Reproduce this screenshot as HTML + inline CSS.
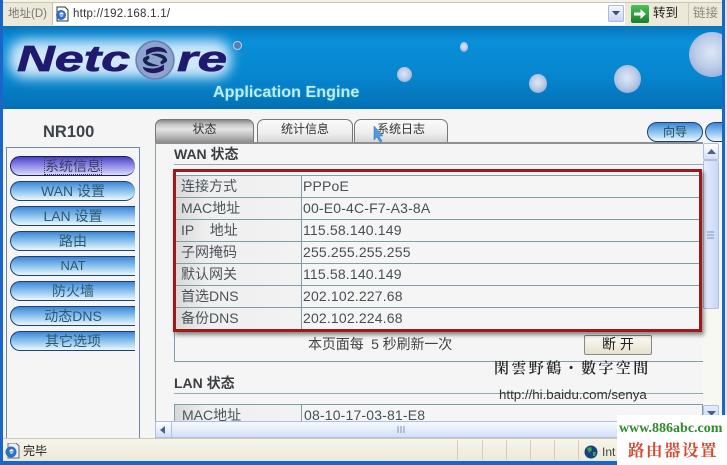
<!DOCTYPE html>
<html><head><meta charset="utf-8">
<style>
html,body{margin:0;padding:0;background:#f5f5f5}
#p{position:relative;width:727px;height:465px;overflow:hidden;background:#f5f5f5;font-family:"Liberation Sans","Noto Sans CJK SC",sans-serif;font-size:13px;color:#4a5a60}
#p div{position:absolute;box-sizing:border-box}
.t{white-space:nowrap}
.nav{left:10px;width:125px;height:20px;border:1px solid #1c3f78;border-right:0;border-radius:10px 0 0 10px;background:linear-gradient(#3f86d4 0,#5fa3e2 22%,#8fc4ee 52%,#c4e2f7 80%,#eef8fe 100%);text-align:center;line-height:18px;font-size:14px;color:#2f5870;white-space:nowrap}
.tab{top:119px;height:23px;border:1px solid #777;border-bottom:0;border-radius:7px 7px 0 0;background:linear-gradient(#fafafa,#eeeeee 60%,#d6d6d6);text-align:center;line-height:19px;font-size:12px;color:#333}
.row{left:175px;width:525px;height:22px;border-bottom:1px solid #7f9fa6}
.lab{left:0;top:0;width:127px;height:21px;border-right:1px solid #7f9fa6;padding-left:6px;line-height:21px;font-size:14px;color:#4a5458;white-space:nowrap;background:linear-gradient(90deg,#d8d8d8,#efefef 25%,#f2f2f2)}
.val{left:128px;top:0;line-height:21px;font-size:14px;letter-spacing:.17px;color:#465054;white-space:nowrap}
.b{border-radius:50%;background:radial-gradient(circle at 48% 45%,#dfe7f5 0,#bccde8 45%,#9db4dc 72%,#2a76b0 90%,#0a5a96 100%)}
</style></head><body>
<div id="p">
<!-- browser toolbar -->
<div style="left:0;top:0;width:727px;height:26px;background:#ece9d8"></div>
<div style="left:0;top:0;width:727px;height:3px;background:#f4f2e6;border-bottom:1px solid #c9c5b2"></div>
<div class="t" style="left:8px;top:6px;font-size:11.5px;color:#777;line-height:16px">地址(D)</div>
<div style="left:52px;top:3px;width:573px;height:22px;background:#fff;border-left:1px solid #c5c2b0"></div>
<svg style="position:absolute;left:54px;top:6px" width="16" height="16" viewBox="0 0 16 16"><path d="M3 1h8l3 3v11H3z" fill="#fff" stroke="#333"/><circle cx="7" cy="9" r="5" fill="#2d6fc4"/><circle cx="7.500" cy="8.500" r="2.200" fill="#fff"/><path d="M5 9h5" stroke="#2d6fc4"/></svg>
<div class="t" style="left:73px;top:7px;font-size:11.500px;color:#333;line-height:14px;letter-spacing:.24px">http://192.168.1.1/</div>
<div style="left:608px;top:5px;width:16px;height:17px;border:1px solid #aeb9d8;border-radius:2px;background:linear-gradient(#f4f7fe,#c9d6f4)"></div>
<svg style="position:absolute;left:612px;top:11px" width="8" height="5"><path d="M0 0h8L4 4.500z" fill="#3c4e82"/></svg>
<svg style="position:absolute;left:631px;top:5px" width="18" height="18" viewBox="0 0 18 18"><defs><linearGradient id="g" x1="0" y1="0" x2="0" y2="1"><stop offset="0" stop-color="#4cc05a"/><stop offset="1" stop-color="#15802a"/></linearGradient></defs><rect width="18" height="18" rx="2" fill="url(#g)"/><path d="M3 7.500h6.500V4l5.500 5-5.500 5v-3.500H3z" fill="#fff"/></svg>
<div class="t" style="left:653px;top:5px;font-size:12.500px;color:#222;line-height:17px">转到</div>
<div style="left:688px;top:3px;width:1px;height:22px;background:#cfcbb6"></div>
<div class="t" style="left:693px;top:5px;font-size:12.500px;color:#8a8a80;line-height:17px">链接</div>
<!-- window borders -->
<div style="left:0;top:0;width:3px;height:465px;background:#1a66c8;z-index:5"></div>
<div style="left:722px;top:0;width:3px;height:465px;background:#1a66c8;z-index:5"></div>
<div style="left:725px;top:0;width:2px;height:465px;background:#dfe8f5;z-index:5"></div>
<!-- banner -->
<div style="left:3px;top:26px;width:719px;height:83px;overflow:hidden;background:linear-gradient(#0676bc 0,#0a8fd8 18%,#0686cf 60%,#0470b5 100%)">
<div style="left:6px;top:14px;width:222px;height:38px;border-radius:16px;background:#cfe8fa;filter:blur(6px)"></div>
<div class="t" style="left:14px;top:11px;font-family:'Liberation Sans',sans-serif;font-style:italic;font-weight:bold;font-size:36px;line-height:44px;color:#201a6e;-webkit-text-stroke:.7px #201a6e;transform:scaleX(1.450);transform-origin:left">Netc</div>
<div class="t" style="left:174px;top:11px;font-family:'Liberation Sans',sans-serif;font-style:italic;font-weight:bold;font-size:36px;line-height:44px;color:#201a6e;-webkit-text-stroke:.7px #201a6e;transform:scaleX(1.470);transform-origin:left">re</div>
<svg style="position:absolute;left:132px;top:14px" width="40" height="40" viewBox="0 0 36 36"><circle cx="18" cy="18" r="17.500" fill="#8ea4cf"/><circle cx="18" cy="18" r="17" fill="none" stroke="#6a82b4" stroke-width="1.500"/><path d="M10 9c8-5 18-3 19 3-5-2-12-3-19 2M26 27c-8 5-18 3-19-3 5 2 12 3 19-2" fill="#1d1a5e"/><path d="M14 13c7-2 14 0 15 5 0 2-3 3-5 4-3-3 1-3 1-5-3-2-7-3-11-4zM22 23c-7 2-14 0-15-5 0-2 3-3 5-4 3 3-1 3-1 5 3 2 7 3 11 4z" fill="#16224f"/></svg>
<div style="left:230px;top:15px;width:9px;height:9px;border-radius:50%;background:#5a7cab;border:1px solid #b9d6ee"></div>
<div class="t" style="left:210px;top:57px;font-weight:bold;font-size:16px;line-height:20px;color:#b6f0f5;text-shadow:0 0 2px #3f9fc8;transform:scaleX(1.010);transform-origin:left">Application Engine</div>
<div class="b" style="left:394px;top:41px;width:15px;height:15px"></div>
<div class="b" style="left:457px;top:16px;width:8px;height:10px"></div>
<div class="b" style="left:526px;top:48px;width:18px;height:19px"></div>
<div class="b" style="left:611px;top:39px;width:27px;height:28px"></div>
<div class="b" style="left:686px;top:6px;width:46px;height:45px"></div>
</div>
<!-- left -->
<div class="t" style="left:43px;top:122px;font-weight:bold;font-size:16.500px;line-height:20px;color:#3a4448">NR100</div>
<div style="left:6px;top:147px;width:134px;height:291px;border:1px solid #6c8aa8;border-bottom:0"></div>
<div class="nav" style="top:156px;border-radius:10px;background:linear-gradient(#4a44c0,#6f69d8 25%,#9a96e8 55%,#c4c2f4 85%,#e2e2fb);border-color:#1b1b70;color:#3c3c66"><span style="outline:1px dotted #444">系统信息</span></div>
<div class="nav" style="top:181px;border-radius:10px">WAN 设置</div>
<div class="nav" style="top:206px">LAN 设置</div>
<div class="nav" style="top:231px">路由</div>
<div class="nav" style="top:256px;font-size:13px">NAT</div>
<div class="nav" style="top:281px">防火墙</div>
<div class="nav" style="top:306px">动态DNS</div>
<div class="nav" style="top:331px">其它选项</div>
<!-- tabs -->
<div class="tab" style="left:155px;width:99px;background:linear-gradient(#8a8a8a,#c8c8c8 22%,#e4e4e4 42%,#bdbdbd 72%,#8f8f8f)">状态</div>
<div class="tab" style="left:257px;width:96px">统计信息</div>
<div class="tab" style="left:354px;width:94px">系统日志</div>
<svg style="position:absolute;left:373px;top:125px;z-index:3" width="12" height="18"><path d="M1 1v14l3-3 3 5 2-1-3-5h4z" fill="#4f9be0" stroke="#2f6fa8" stroke-width=".5"/></svg>
<div class="nav" style="left:647px;top:122px;width:56px;height:20px;border:1px solid #1c3f78;border-radius:10px;font-size:12px;color:#1e4a60">向导</div>
<div class="nav" style="left:705px;top:122px;width:17px;height:20px"></div>
<!-- content frame -->
<div style="left:155px;top:142px;width:548px;height:2px;background:#8f8f8f"></div>
<div style="left:155px;top:142px;width:1px;height:296px;background:#8fa3a8"></div>
<div class="t" style="left:174px;top:146px;font-weight:bold;font-size:14px;line-height:17px;color:#3a3f42">WAN 状态</div>
<div style="left:174px;top:164px;width:529px;height:1px;background:#8faab0"></div>
<!-- table -->
<div style="left:174px;top:175px;width:529px;height:187px;border:1px solid #7f9fa6;border-top:0;border-right:0"></div>
<div class="row" style="top:175px;border-top:1px solid #7f9fa6;height:23px"><div class="lab">连接方式</div><div class="val">PPPoE</div></div>
<div class="row" style="top:198px"><div class="lab">MAC地址</div><div class="val">00-E0-4C-F7-A3-8A</div></div>
<div class="row" style="top:220px"><div class="lab">IP&nbsp;&nbsp;&nbsp;&nbsp;地址</div><div class="val">115.58.140.149</div></div>
<div class="row" style="top:242px"><div class="lab">子网掩码</div><div class="val">255.255.255.255</div></div>
<div class="row" style="top:264px"><div class="lab">默认网关</div><div class="val">115.58.140.149</div></div>
<div class="row" style="top:286px"><div class="lab">首选DNS</div><div class="val">202.102.227.68</div></div>
<div class="row" style="top:308px;border-bottom:0"><div class="lab">备份DNS</div><div class="val">202.102.224.68</div></div>
<!-- red box -->
<div style="left:173px;top:169px;width:529px;height:163px;border:3px solid #a01818;box-shadow:2px 3px 4px rgba(0,0,0,.45);z-index:2"></div>
<div class="t" style="left:308px;top:335px;font-size:14px;line-height:18px;letter-spacing:-.1px;color:#444">本页面每&nbsp;&nbsp;5 秒刷新一次</div>
<div style="left:584px;top:335px;width:68px;height:20px;border:1px solid #8a8a80;border-radius:2px;background:linear-gradient(#fbfaf5,#e6e1cf);text-align:center;line-height:17px;font-size:14px;color:#222">断&nbsp;开</div>
<div class="t" style="left:494px;top:359px;font-family:'Noto Serif CJK TC','Noto Serif CJK SC',serif;font-weight:600;font-size:15px;line-height:18px;letter-spacing:2.400px;color:#222;z-index:3">閑雲野鶴・數字空間</div>
<!-- LAN -->
<div class="t" style="left:174px;top:375px;font-weight:bold;font-size:14px;line-height:17px;color:#3a3f42">LAN 状态</div>
<div style="left:174px;top:393px;width:529px;height:1px;background:#8faab0"></div>
<div class="t" style="left:499px;top:387px;font-size:13.300px;line-height:15px;color:#333;z-index:3">http://hi.baidu.com/senya</div>
<div style="left:174px;top:404px;width:529px;height:18px;border:1px solid #7f9fa6;border-bottom:0;overflow:hidden">
<div style="left:0;top:0;width:127px;height:18px;border-right:1px solid #7f9fa6;padding-left:7px;line-height:21px;font-size:14px;color:#4a5458;white-space:nowrap;background:linear-gradient(90deg,#d8d8d8,#efefef 25%,#f2f2f2)">MAC地址</div>
<div style="left:129px;top:0;line-height:21px;font-size:14px;letter-spacing:.17px;color:#465054;white-space:nowrap">08-10-17-03-81-E8</div></div>
<!-- scrollbars -->
<div style="left:703px;top:143px;width:19px;height:279px;background:#f8f8f2"></div>
<div style="left:703px;top:143px;width:16px;height:17px;background:linear-gradient(#fff,#d3dff7);border:1px solid #aebfe3;border-radius:2px"></div>
<svg style="position:absolute;left:707px;top:149px" width="9" height="5"><path d="M0 5L4.500 0 9 5z" fill="#4d6185"/></svg>
<div style="left:703px;top:160px;width:16px;height:149px;background:linear-gradient(90deg,#e6eefe,#c8d7f7);border:1px solid #aebfe3;border-radius:2px"></div>
<svg style="position:absolute;left:707px;top:231px" width="8" height="9"><path d="M0 1h7M0 4h7M0 7h7" stroke="#7f93b8"/></svg>
<div style="left:703px;top:405px;width:16px;height:17px;background:linear-gradient(#e6eefe,#c4d4f7);border:1px solid #aebfe3;border-radius:2px"></div>
<svg style="position:absolute;left:707px;top:411px" width="9" height="5"><path d="M0 0L4.500 5 9 0z" fill="#4d6185"/></svg>
<div style="left:155px;top:421px;width:565px;height:17px;background:linear-gradient(#f6f9ff,#d4e0f8);border:1px solid #aebfe3;border-radius:2px"></div>
<div style="left:155px;top:421px;width:17px;height:17px;background:linear-gradient(#fff,#d3dff7);border:1px solid #aebfe3;border-radius:2px"></div>
<svg style="position:absolute;left:160px;top:426px" width="5" height="8"><path d="M5 0L0 4 5 8z" fill="#4d6185"/></svg>
<svg style="position:absolute;left:397px;top:426px" width="9" height="8"><path d="M1 0v7M4 0v7M7 0v7" stroke="#7f93b8"/></svg>
<!-- status bar -->
<div style="left:0;top:438px;width:727px;height:23px;background:linear-gradient(#f7f5ea,#ece9d8);border-top:1px solid #cfcbb6;z-index:6"></div>
<div style="left:0;top:461px;width:727px;height:4px;background:#1a66c8;z-index:6"></div>
<div style="left:0;top:438px;width:3px;height:27px;background:#1a66c8;z-index:6"></div>
<svg style="position:absolute;left:4px;top:443px;z-index:7" width="16" height="16" viewBox="0 0 16 16"><path d="M4 0h8l3 3v12H4z" fill="#eef" stroke="#667"/><circle cx="7" cy="9" r="5.500" fill="#2d6fc4"/><circle cx="7.500" cy="8.500" r="2.200" fill="#fff"/><path d="M5 9h5" stroke="#2d6fc4"/></svg>
<div class="t" style="left:23px;top:443px;font-size:12px;line-height:16px;color:#222;z-index:7">完毕</div>
<div style="left:457px;top:440px;width:1px;height:20px;background:#d2ceb9;z-index:7"></div>
<div style="left:482px;top:440px;width:1px;height:20px;background:#d2ceb9;z-index:7"></div>
<div style="left:506px;top:440px;width:1px;height:20px;background:#d2ceb9;z-index:7"></div>
<div style="left:530px;top:440px;width:1px;height:20px;background:#d2ceb9;z-index:7"></div>
<div style="left:554px;top:440px;width:1px;height:20px;background:#d2ceb9;z-index:7"></div>
<div style="left:578px;top:440px;width:1px;height:20px;background:#d2ceb9;z-index:7"></div>
<svg style="position:absolute;left:584px;top:445px;z-index:7" width="14" height="14" viewBox="0 0 14 14"><circle cx="7" cy="7" r="6.500" fill="#16407f"/><path d="M3 3l4-1 1 3-3 3zM9 7l3 0-1 4-2 0z" fill="#3fa34a"/></svg>
<div class="t" style="left:602px;top:444px;font-size:12px;line-height:16px;color:#444;z-index:7">Int</div>
<!-- watermark -->
<div style="left:617px;top:415px;width:110px;height:50px;background:#fff;z-index:8"></div>
<div class="t" style="left:619px;top:421px;font-family:'Liberation Serif',serif;font-weight:bold;font-size:14px;line-height:16px;color:#2e8a2a;z-index:9">www.886abc.com</div>
<div class="t" style="left:628px;top:440px;font-family:'Noto Serif CJK SC',serif;font-weight:700;font-size:16.500px;line-height:18px;letter-spacing:1.500px;color:#d84a30;z-index:9">路由器设置</div>
</div>
</body></html>
